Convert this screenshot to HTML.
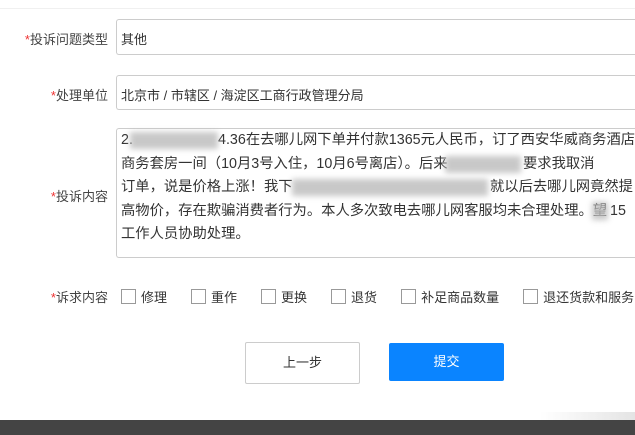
<!DOCTYPE html>
<html><head><meta charset="utf-8"><style>
html,body{margin:0;width:635px;height:435px;overflow:hidden}
body{background:#fff;font-family:"Liberation Sans","Noto Sans CJK SC",sans-serif;font-size:13px;color:#333;position:relative}
.a{position:absolute}
.lbl{position:absolute;right:527px;text-align:right;white-space:nowrap;color:#444}
.lbl b{color:#e33;font-weight:normal}
.inp{position:absolute;left:116px;width:525px;border:1px solid #ccc;border-right:none;border-radius:3px 0 0 3px;background:#fff;overflow:hidden}
.cb{display:inline-block;width:13px;height:13px;border:1px solid #999;vertical-align:-2px;margin-right:5px;background:#fff}
.sp{display:inline-block;width:24px}
.blur{position:absolute;background:#bbb;filter:blur(3px);opacity:.8}
.t{position:absolute;white-space:nowrap;font-size:14.3px;line-height:20px}
</style></head><body>
<div class="a" style="left:0;top:8px;width:635px;height:1px;background:#f0f0f0"></div>
<div class="lbl" style="top:29px"><b>*</b>投诉问题类型</div>
<div class="inp" style="top:19px;height:34px"><span class="a" style="left:4px;top:9px">其他</span></div>
<div class="lbl" style="top:85px"><b>*</b>处理单位</div>
<div class="inp" style="top:75px;height:33px"><span class="a" style="left:4px;top:9px">北京市 / 市辖区 / 海淀区工商行政管理分局</span></div>
<div class="lbl" style="top:186px"><b>*</b>投诉内容</div>
<div class="inp" style="top:128px;height:128px"></div>
<div class="t" style="left:121px;top:130px">2.</div>
<div class="t" style="left:218px;top:130px">4.36在去哪儿网下单并付款1365元人民币，订了西安华威商务酒店</div>
<div class="t" style="left:121px;top:154px">商务套房一间（10月3号入住，10月6号离店）。后来</div>
<div class="t" style="left:523px;top:154px">要求我取消</div>
<div class="t" style="left:121px;top:177px">订单，说是价格上涨！我下</div>
<div class="t" style="left:490px;top:177px">就以后去哪儿网竟然提</div>
<div class="t" style="left:121px;top:201px">高物价，存在欺骗消费者行为。本人多次致电去哪儿网客服均未合理处理。望</div>
<div class="t" style="left:610px;top:201px">15</div>
<div class="t" style="left:121px;top:224px">工作人员协助处理。</div>
<div class="blur" style="left:130px;top:132px;width:88px;height:17px"></div>
<div class="blur" style="left:445px;top:156px;width:76px;height:17px"></div>
<div class="blur" style="left:292px;top:179px;width:196px;height:17px"></div>
<div class="blur" style="left:592px;top:202px;width:16px;height:18px"></div>
<div class="lbl" style="top:287px"><b>*</b>诉求内容</div>
<div class="a" style="left:121px;top:287px;white-space:nowrap">
<span class="cb"></span>修理<span class="sp"></span><span class="cb"></span>重作<span class="sp"></span><span class="cb"></span>更换<span class="sp"></span><span class="cb"></span>退货<span class="sp"></span><span class="cb"></span>补足商品数量<span class="sp"></span><span class="cb"></span>退还货款和服务</div>
<div class="a" style="left:245px;top:342px;width:113px;height:40px;border:1px solid #ccc;border-radius:2px;text-align:center;line-height:40px">上一步</div>
<div class="a" style="left:389px;top:343px;width:115px;height:38px;background:#0a84ff;border-radius:2px;color:#fff;text-align:center;line-height:38px">提交</div>
<div class="a" style="left:0;top:420px;width:635px;height:15px;background:#444"></div>
<div class="a" style="left:540px;top:412px;width:95px;height:8px;background:linear-gradient(to right,#fff,#e4e4e4)"></div>
</body></html>
